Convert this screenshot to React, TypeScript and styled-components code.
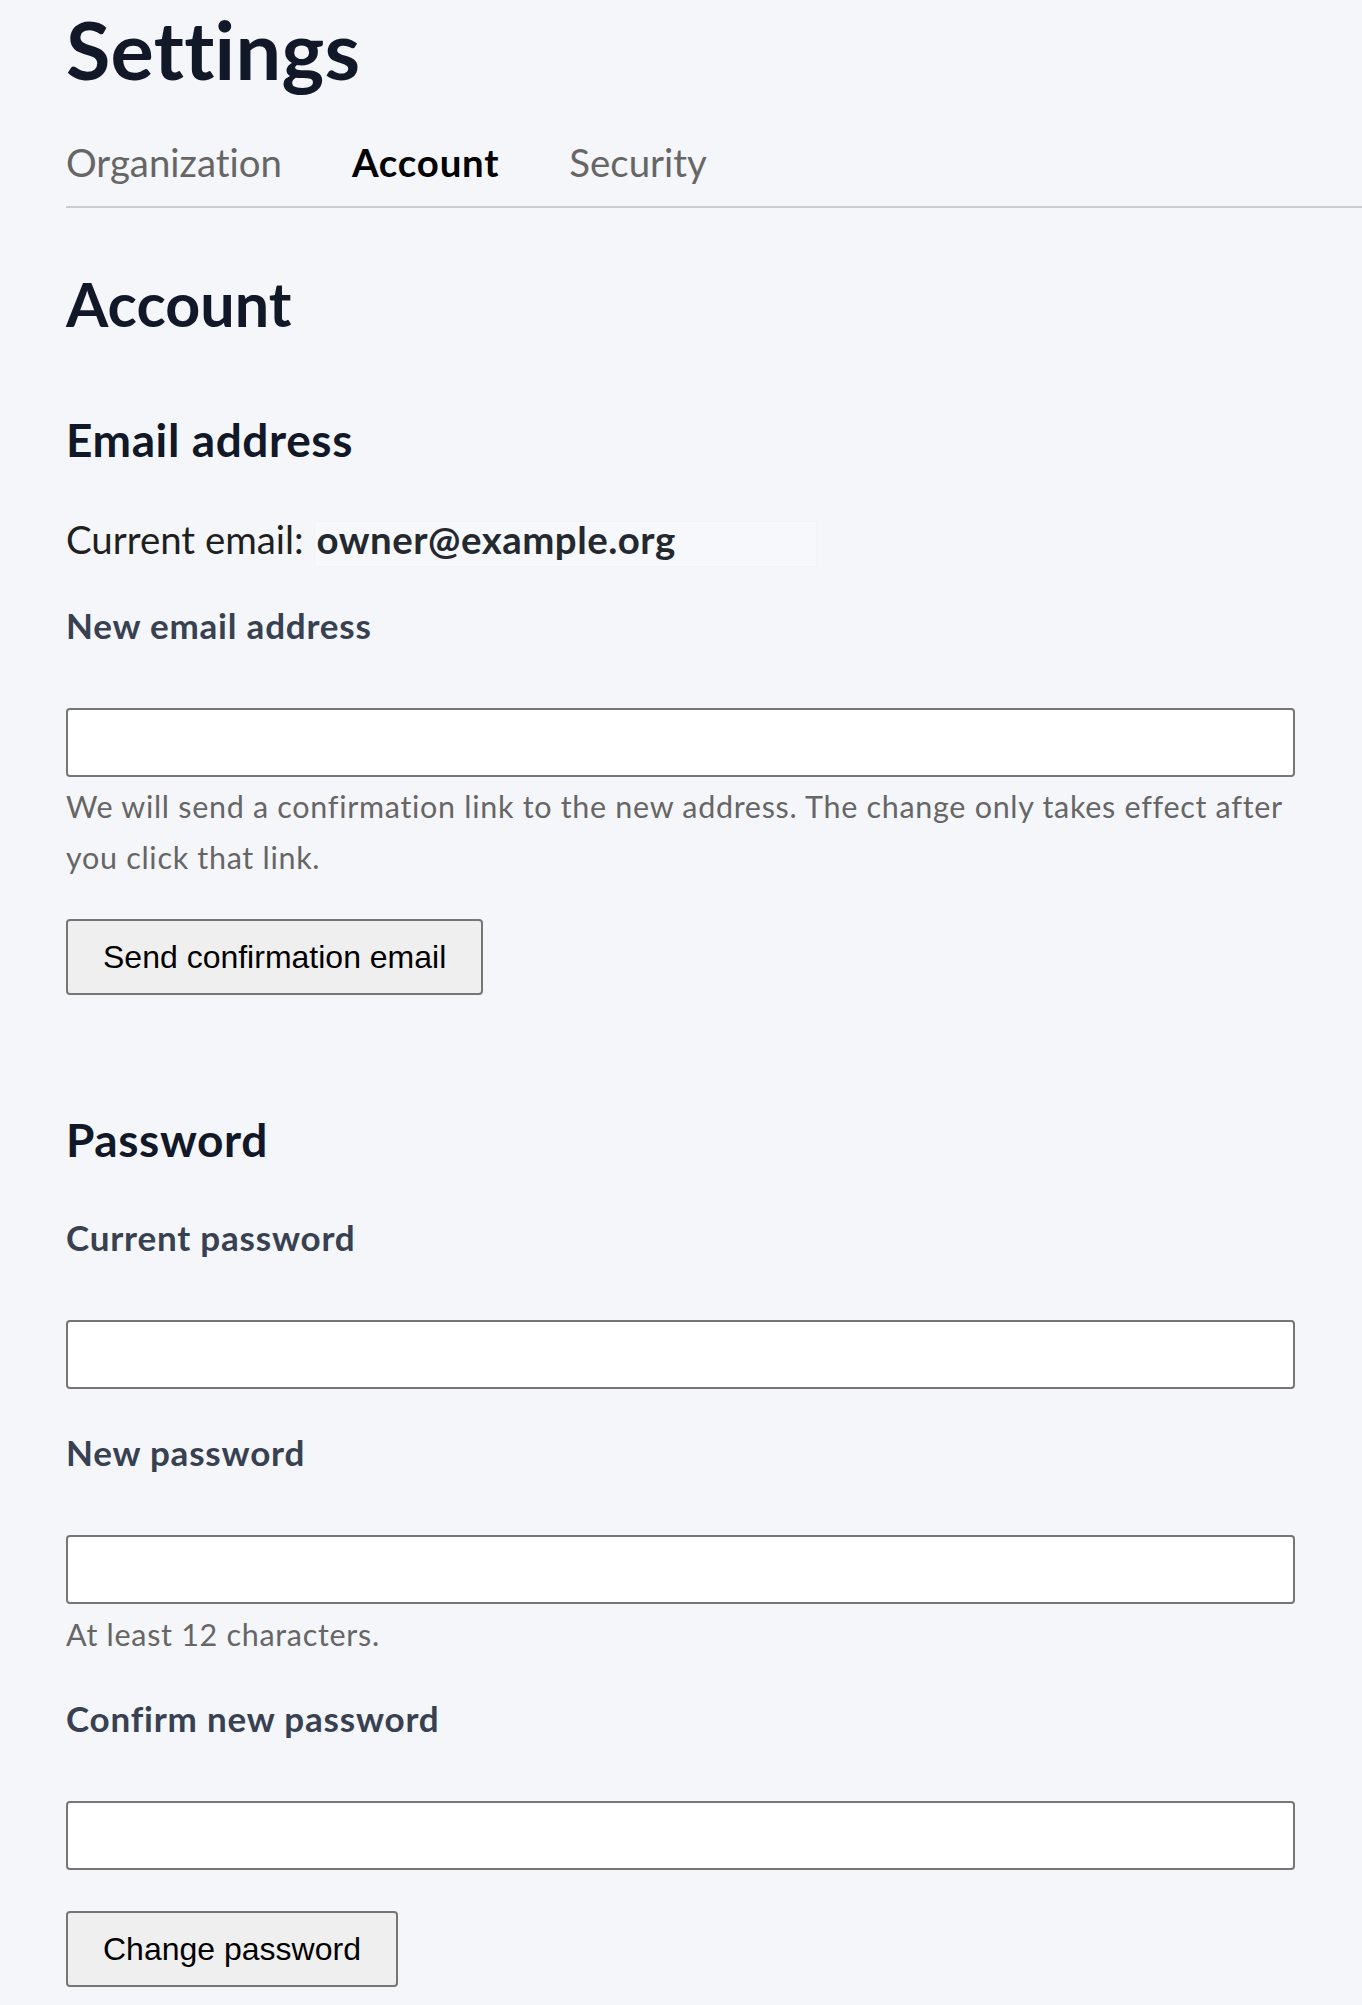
import React from "react";
import styled, { createGlobalStyle } from "styled-components";

const GlobalStyle = createGlobalStyle`
  html, body {
    margin: 0;
    padding: 0;
    background: #f5f6fa;
  }
  body {
    font-family: Lato, "Open Sans", "Noto Sans", sans-serif;
    font-variant-ligatures: none;
    color: #1f2328;
  }
`;

const Page = styled.main`
  padding: 0 0 40px 66px;
  background: #f5f6fa;
  min-height: 2005px;
  box-sizing: border-box;
`;

const Title = styled.h1`
  margin: 0;
  font-size: 81px;
  line-height: 98px;
  font-weight: 700;
  letter-spacing: 0.3px;
  color: #111827;
`;

const Tabs = styled.nav`
  display: flex;
  gap: 70px;
  margin-top: 38px;
  padding-bottom: 18px;
  border-bottom: 2px solid #cccccc;
`;

const Tab = styled.a<{ $active?: boolean }>`
  font-size: 38.4px;
  line-height: 52px;
  text-decoration: none;
  color: ${({ $active }) => ($active ? "#000000" : "#666666")};
  font-weight: ${({ $active }) => ($active ? 700 : 400)};
  letter-spacing: ${({ $active }) => ($active ? "0.8px" : "0")};
`;

const PageHeading = styled.h2`
  margin: 59px 0 0;
  font-size: 61px;
  line-height: 74px;
  font-weight: 700;
  color: #111827;
`;

const SectionHeading = styled.h3<{ $gap: number }>`
  margin: ${({ $gap }) => $gap}px 0 0;
  font-size: 46px;
  line-height: 56px;
  font-weight: 700;
  letter-spacing: 0.6px;
  color: #111827;
`;

const CurrentEmail = styled.p`
  margin: 42px 0 0;
  font-size: 38.4px;
  line-height: 58px;
  color: #1f1f1f;
`;

const EmailValue = styled.span`
  display: inline-block;
  box-sizing: border-box;
  width: 503px;
  height: 46px;
  padding-left: 2px;
  line-height: 34px;
  font-weight: 700;
  letter-spacing: 0.5px;
  color: #24292f;
  background: #f7f8fb;
  border: 1px solid #f3f4f8;
`;

const Label = styled.label<{ $gap: number }>`
  display: block;
  margin-top: ${({ $gap }) => $gap}px;
  font-size: 35px;
  line-height: 44px;
  font-weight: 700;
  letter-spacing: 0.8px;
  color: #374151;
`;

const Input = styled.input`
  display: block;
  box-sizing: border-box;
  width: 100%;
  max-width: 1229px;
  height: 69px;
  margin-top: 61px;
  padding: 0 8px;
  background: #ffffff;
  border: 2px solid #767676;
  border-radius: 4px;
  font-size: 32px;
  outline: none;
`;

const Help = styled.p<{ $gap: number }>`
  margin: ${({ $gap }) => $gap}px 0 0;
  max-width: 1229px;
  font-size: 30.5px;
  line-height: 51px;
  letter-spacing: 0.7px;
  color: #666666;
`;

const Button = styled.button<{ $gap: number }>`
  display: block;
  box-sizing: border-box;
  height: 76px;
  margin-top: ${({ $gap }) => $gap}px;
  padding: 0 35px;
  background: #efefef;
  border: 2px solid #767676;
  border-radius: 4px;
  font-family: "Liberation Sans", Arial, sans-serif;
  font-size: 32px;
  color: #000000;
`;

const App: React.FunctionComponent = () => {
  return (
    <>
      <GlobalStyle />
      <Page>
        <Title>Settings</Title>
        <Tabs>
          <Tab href="#">Organization</Tab>
          <Tab href="#" $active>
            Account
          </Tab>
          <Tab href="#">Security</Tab>
        </Tabs>

        <PageHeading>Account</PageHeading>

        <SectionHeading $gap={71}>Email address</SectionHeading>
        <CurrentEmail>
          Current email: <EmailValue>owner@example.org</EmailValue>
        </CurrentEmail>
        <Label $gap={35} htmlFor="new-email">
          New email address
        </Label>
        <Input id="new-email" type="email" />
        <Help $gap={4}>
          We will send a confirmation link to the new address. The change only
          takes effect after you click that link.
        </Help>
        <Button $gap={36}>Send confirmation email</Button>

        <SectionHeading $gap={117}>Password</SectionHeading>
        <Label $gap={47} htmlFor="current-password">
          Current password
        </Label>
        <Input id="current-password" type="password" />
        <Label $gap={41} htmlFor="new-password">
          New password
        </Label>
        <Input id="new-password" type="password" />
        <Help $gap={5}>At least 12 characters.</Help>
        <Label $gap={36} htmlFor="confirm-password">
          Confirm new password
        </Label>
        <Input id="confirm-password" type="password" />
        <Button $gap={41}>Change password</Button>
      </Page>
    </>
  );
};

export default App;
